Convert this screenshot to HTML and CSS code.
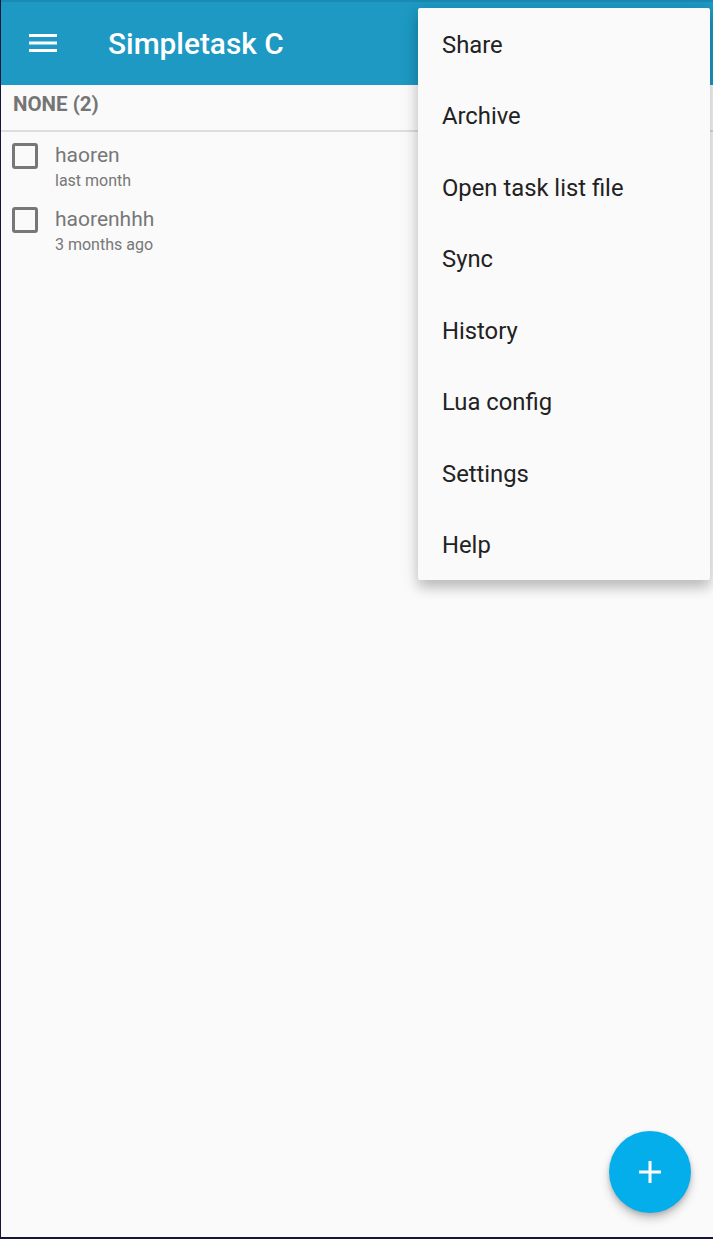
FILE: index.html
```html
<!DOCTYPE html>
<html>
<head>
<meta charset="utf-8">
<link rel="stylesheet" href="styles.css">
</head>
<body>
<div class="frame">
  <header class="toolbar">
    <svg class="hamburger" width="28" height="20" viewBox="0 0 28 20">
      <rect x="0" y="1" width="28" height="3" fill="#fff"/>
      <rect x="0" y="8.5" width="28" height="3" fill="#fff"/>
      <rect x="0" y="16" width="28" height="3" fill="#fff"/>
    </svg>
    <div class="title">Simpletask C</div>
  </header>
  <div class="section">NONE (2)</div>
  <ul class="tasks">
    <li class="task">
      <span class="check"></span>
      <div class="task-text">
        <div class="task-name">haoren</div>
        <div class="task-date">last month</div>
      </div>
    </li>
    <li class="task">
      <span class="check"></span>
      <div class="task-text">
        <div class="task-name">haorenhhh</div>
        <div class="task-date">3 months ago</div>
      </div>
    </li>
  </ul>
  <ul class="menu">
    <li>Share</li>
    <li>Archive</li>
    <li>Open task list file</li>
    <li>Sync</li>
    <li>History</li>
    <li>Lua config</li>
    <li>Settings</li>
    <li>Help</li>
  </ul>
  <button class="fab" aria-label="Add">
    <svg width="24" height="24" viewBox="0 0 24 24">
      <rect x="10.5" y="1" width="3" height="22" fill="#fff"/>
      <rect x="1" y="10.5" width="22" height="3" fill="#fff"/>
    </svg>
  </button>
</div>
</body>
</html>
```

FILE: styles.css
```css
* { box-sizing: border-box; }
html, body {
  margin: 0;
  padding: 0;
  background: #fafafa;
  font-family: Roboto, "Noto Sans", sans-serif;
}
.frame {
  position: relative;
  width: 713px;
  height: 1239px;
  border-left: 1px solid #14163e;
  border-bottom: 2px solid #14163e;
  background: #fafafa;
  overflow: hidden;
}
.toolbar {
  height: 85px;
  background: #1d99c3;
  border-top: 2px solid #1a8ab2;
  display: flex;
  align-items: center;
  padding-left: 28px;
}
.hamburger { display: block; margin-top: -1px; }
.title {
  margin-left: 51px;
  color: #fff;
  font-size: 29.8px;
  font-weight: 500;
}
.section {
  height: 47px;
  border-bottom: 2px solid #dedede;
  padding-left: 12px;
  padding-top: 7px;
  font-size: 20.5px;
  font-weight: 700;
  color: #757575;
}
.tasks {
  list-style: none;
  margin: 0;
  padding: 11px 0 0 0;
}
.task {
  display: flex;
  height: 64px;
  padding-left: 11px;
}
.check {
  width: 26px;
  height: 26px;
  border: 3px solid #777;
  border-radius: 3px;
  flex: none;
}
.task-text { margin-left: 17px; }
.task-name {
  font-size: 21px;
  color: #777;
  line-height: 24px;
}
.task-date {
  font-size: 16px;
  color: #777;
  line-height: 20px;
  margin-top: 4px;
}
.menu {
  position: absolute;
  top: 8px;
  left: 417px;
  width: 292px;
  margin: 0;
  padding: 0;
  list-style: none;
  background: #fafafa;
  border-radius: 2px;
  box-shadow: 0 8px 12px rgba(0,0,0,0.18), 0 3px 20px rgba(0,0,0,0.12);
}
.menu li {
  height: 71.5px;
  display: flex;
  align-items: center;
  padding-left: 24px;
  padding-top: 2px;
  font-size: 23.8px;
  color: #222;
}
.fab {
  position: absolute;
  left: 608px;
  top: 1131px;
  width: 82px;
  height: 82px;
  border-radius: 50%;
  border: none;
  background: #03aeeb;
  display: flex;
  align-items: center;
  justify-content: center;
  padding: 0;
  box-shadow: 0 6px 10px rgba(0,0,0,0.2), 0 2px 4px rgba(0,0,0,0.15);
}
.fab svg { display: block; }
```
